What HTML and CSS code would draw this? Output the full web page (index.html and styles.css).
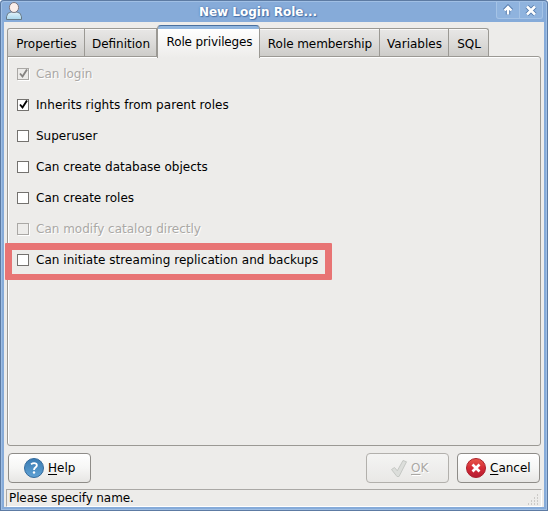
FILE: index.html
```html
<!DOCTYPE html>
<html lang="en">
<head>
<meta charset="utf-8">
<title>New Login Role...</title>
<link rel="stylesheet" href="styles.css">
</head>
<body>
<div class="window">
  <header class="titlebar">
    <svg class="user" width="18" height="20" viewBox="0 0 18 20">
      <defs>
        <linearGradient id="shirt" x1="0" y1="0" x2="0" y2="1"><stop offset="0" stop-color="#e2f2fa"/><stop offset="1" stop-color="#a9d6ec"/></linearGradient>
      </defs>
      <path d="M.5 18.500v-2.700q.3-4.300 4.500-4.800h6q4.200.5 4.500 4.800v2.700z" fill="url(#shirt)" stroke="#677a88"/>
      <ellipse cx="8" cy="6.500" rx="4.600" ry="5" fill="#faeeea" stroke="#7c7880"/>
    </svg>
    <h1>New Login Role...</h1>
    <div class="controls">
      <span class="control"><svg width="22" height="17" viewBox="0 0 22 17"><path d="M11 12.500V5.500M7.500 8.500L11 5l3.500 3.500" fill="none" stroke="#5279ab" stroke-width="4.400"/><path d="M11 12.500V5.500M7.500 8.500L11 5l3.500 3.500" fill="none" stroke="#fff" stroke-width="2.400"/></svg></span>
      <span class="control"><svg width="22" height="17" viewBox="0 0 22 17"><path d="M7 4.500l8 8M15 4.500l-8 8" stroke="#5279ab" stroke-width="4.400"/><path d="M7 4.500l8 8M15 4.500l-8 8" stroke="#fff" stroke-width="2.600"/></svg></span>
    </div>
  </header>
  <main class="content">
    <nav class="tabs">
      <span class="tab t1">Properties</span>
      <span class="tab t2">Definition</span>
      <span class="tab active">Role privileges</span>
      <span class="tab t4">Role membership</span>
      <span class="tab t5">Variables</span>
      <span class="tab t6">SQL</span>
    </nav>
    <section class="panel">
      <div class="option disabled"><span class="box"><svg width="11" height="11" viewBox="0 0 11 11"><path d="M2 5.500l2.500 3L9 1.500" fill="none" stroke="currentColor" stroke-width="1.900"/></svg></span><span class="label">Can login</span></div>
      <div class="option wide"><span class="box"><svg width="11" height="11" viewBox="0 0 11 11"><path d="M2 5.500l2.500 3L9 1.500" fill="none" stroke="currentColor" stroke-width="1.900"/></svg></span><span class="label">Inherits rights from parent roles</span></div>
      <div class="option"><span class="box"></span><span class="label">Superuser</span></div>
      <div class="option"><span class="box"></span><span class="label">Can create database objects</span></div>
      <div class="option"><span class="box"></span><span class="label">Can create roles</span></div>
      <div class="option disabled"><span class="box"></span><span class="label">Can modify catalog directly</span></div>
      <div class="option marked wide"><span class="box"></span><span class="label">Can initiate streaming replication and backups</span></div>
    </section>
    <div class="buttons">
      <div class="button help">
        <svg width="20" height="20" viewBox="0 0 20 20"><defs><linearGradient id="blue" x1="0" y1="0" x2="0" y2="1"><stop offset="0" stop-color="#397bb3"/><stop offset="1" stop-color="#60a2d4"/></linearGradient></defs><circle cx="10" cy="10" r="9.500" fill="url(#blue)" stroke="#346a9c"/><path d="M7 6.200q3-2 5.200-.5 1.600 1.800-.6 3.500Q10 10.300 10 12" fill="none" stroke="#fff" stroke-width="1.800"/><circle cx="10" cy="14.500" r="1.200" fill="#fff"/></svg>
        <span><u>H</u>elp</span>
      </div>
      <div class="button ok">
        <svg width="18" height="19" viewBox="0 0 18 19"><path d="M1.500 10.500l3-2 2.800 3.300L13 1.500l3.500 1.300L9 17.500H7z" fill="#dcdedb" stroke="#c5c8c4"/></svg>
        <span><u>O</u>K</span>
      </div>
      <div class="button cancel">
        <svg width="20" height="20" viewBox="0 0 20 20"><defs><linearGradient id="red" x1="0" y1="0" x2="0" y2="1"><stop offset="0" stop-color="#e95b4c"/><stop offset=".5" stop-color="#d42a35"/><stop offset="1" stop-color="#b51a31"/></linearGradient></defs><circle cx="10" cy="10" r="9.500" fill="url(#red)" stroke="#aa202c"/><path d="M6.500 6.500l7 7M13.500 6.500l-7 7" stroke="#fff" stroke-width="2.700"/></svg>
        <span><u>C</u>ancel</span>
      </div>
    </div>
    <footer class="status">
      <span>Please specify name.</span>
      <svg width="12" height="12" viewBox="0 0 12 12"><path d="M9 1h2M6 4h2M9 4h2M3 7h2M6 7h2M9 7h2M0 10h2M3 10h2M6 10h2M9 10h2" stroke="#aaa8a5" stroke-dasharray="1 1"/></svg>
    </footer>
  </main>
</div>
</body>
</html>
```
FILE: styles.css
```css
*, *::after { box-sizing: border-box; }
html { background: #fff; }
body { margin: 0; font: 12px/16px "DejaVu Sans", sans-serif; color: #000; overflow: hidden; }
svg { display: block; flex: none; }
.window {
  width: 548px; height: 511px; display: flex; flex-direction: column;
  padding: 1px 4px 4px 4px; background: #86abd9; border-radius: 4px 4px 0 0;
  box-shadow: inset 0 0 0 1px #5d7ba3, inset 0 0 0 2px #a0bfe4;
}
.titlebar { height: 21px; flex: none; display: flex; padding: 0 2px; }
.user { margin-top: 0; }
h1 {
  flex: 1; margin: 0; padding: 3px 4px 0 0; font-size: 12px; line-height: 16px;
  text-align: center; color: #fff; text-shadow: 0 0 2px #4570a8, 1px 1px 1px #4570a8;
}
.controls { display: flex; width: 47px; height: 17px; margin-top: 1px; margin-right: -1px; gap: 1px; border: 1px solid #a5c3e6; border-top: 0; border-radius: 0 0 3px 3px; background: #a5c3e6; overflow: hidden; }
.control { width: 22px; background: #8fb3de; }
.content { flex: 1; min-height: 0; display: flex; flex-direction: column; padding: 3px 2px 0; background: #edecea; }
.tabs { display: flex; align-items: flex-end; height: 32px; padding-left: 1px; flex: none; }
.tab {
  height: 29px; padding-top: 7px; padding-left: 1px; text-align: center; border: 1px solid #9b9994; border-bottom: 0;
  border-left-width: 0; background: linear-gradient(#e8e7e6, #dcdbd9 50%, #cccbc8);
  box-shadow: inset 0 1px #f8f8f7; white-space: nowrap;
}
.t1 { width: 78px; border-left-width: 1px; border-radius: 3px 0 0; }
.t2 { width: 72px; }
.active {
  width: 103px; height: 33px; margin-bottom: -1px; padding-top: 8px; position: relative;
  border: 1px solid #9b9994; border-top: 1px solid #49709f; border-bottom: 0; border-radius: 4px 4px 0 0;
  background: linear-gradient(#91b6df 0 3px, #fff 3px, #edecea); box-shadow: none; letter-spacing: -.14px; padding-left: 2px;
}
.t4 { width: 120px; letter-spacing: -.06px; }
.t5 { width: 69px; }
.t6 { width: 40px; border-radius: 0 3px 0 0; }
.panel {
  height: 390px; margin: -1px 1px 0 1px; flex: none; padding: 1px 0 0 9px;
  border: 1px solid #9b9994; border-radius: 0 3px 3px 3px; box-shadow: inset 1px 1px #fff;
}
.option { height: 31px; display: flex; align-items: center; gap: 7px; }
.box { width: 12px; height: 12px; border: 1px solid #74726f; background: #fff; display: flex; align-items: center; justify-content: center; }
.label { white-space: nowrap; }
.wide .label { letter-spacing: .045px; }
.disabled { color: #aaa8a5; text-shadow: 1px 1px #fff; }
.disabled .box { background: #edecea; border-color: #aaa8a5; color: #858381; box-shadow: 1px 1px #fff; }
.marked { position: relative; }
.marked::after { content: ""; position: absolute; left: -12px; top: -1px; width: 327px; height: 37px; border: 6px solid #e87474; border-top-width: 7px; border-left-width: 7px; border-right-width: 7px; border-radius: 1px; }
.buttons { display: flex; height: 43px; padding: 7px 2px 0 2px; flex: none; }
.button { height: 30px; display: flex; align-items: center; border: 1px solid #8e8c88; border-radius: 4px; background: linear-gradient(#fff, #f6f6f5 50%, #e7e6e4); }
.button u { text-underline-offset: 2px; text-decoration-thickness: 1px; }
.help { width: 83px; padding-left: 15px; gap: 4px; }
.ok { width: 83px; margin-left: auto; padding-left: 23px; gap: 3px; color: #aaa8a5; text-shadow: 1px 1px #fff; border-color: #b2b0ac; background: linear-gradient(#f4f4f3, #e9e8e6); }
.cancel { width: 83px; margin-left: 8px; padding-left: 8px; gap: 4px; }
.status { height: 18px; display: flex; justify-content: space-between; border: 1px solid #aaa8a5; border-right-color: #fff; border-bottom-color: #fff; padding-left: 2px; letter-spacing: -.1px; }
.status svg { margin-top: 4px; margin-right: 1px; }
```
